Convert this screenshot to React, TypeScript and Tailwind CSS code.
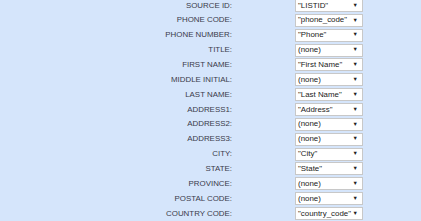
const FIELDS: { label: string; value: string }[] = [
  { label: "SOURCE ID:", value: "\"LISTID\"" },
  { label: "PHONE CODE:", value: "\"phone_code\"" },
  { label: "PHONE NUMBER:", value: "\"Phone\"" },
  { label: "TITLE:", value: "(none)" },
  { label: "FIRST NAME:", value: "\"First Name\"" },
  { label: "MIDDLE INITIAL:", value: "(none)" },
  { label: "LAST NAME:", value: "\"Last Name\"" },
  { label: "ADDRESS1:", value: "\"Address\"" },
  { label: "ADDRESS2:", value: "(none)" },
  { label: "ADDRESS3:", value: "(none)" },
  { label: "CITY:", value: "\"City\"" },
  { label: "STATE:", value: "\"State\"" },
  { label: "PROVINCE:", value: "(none)" },
  { label: "POSTAL CODE:", value: "(none)" },
  { label: "COUNTRY CODE:", value: "\"country_code\"" },
];

export default function App() {
  return (
    <div className="h-[221px] w-[421px] overflow-hidden bg-[#d5e5fb] font-['Liberation_Sans',Arial,sans-serif]">
      <div className="-mt-[2px] flex flex-col">
        {FIELDS.map(({ label, value }) => (
          <div className="flex h-[14.86px] items-center" key={label}>
            <div className="w-[233px] pr-px text-right text-[7.9px] text-[#3a3a4a]">
              {label}
            </div>
            <div className="ml-[62px] flex h-[13px] w-[68px] items-center justify-between border border-[#c8c8c8] bg-white pl-[2px] pr-[4px] text-[7.9px] text-[#222]">
              <span className="whitespace-nowrap">{value}</span>
              <span className="text-[5.5px] leading-none">▼</span>
            </div>
          </div>
        ))}
      </div>
    </div>
  );
}
